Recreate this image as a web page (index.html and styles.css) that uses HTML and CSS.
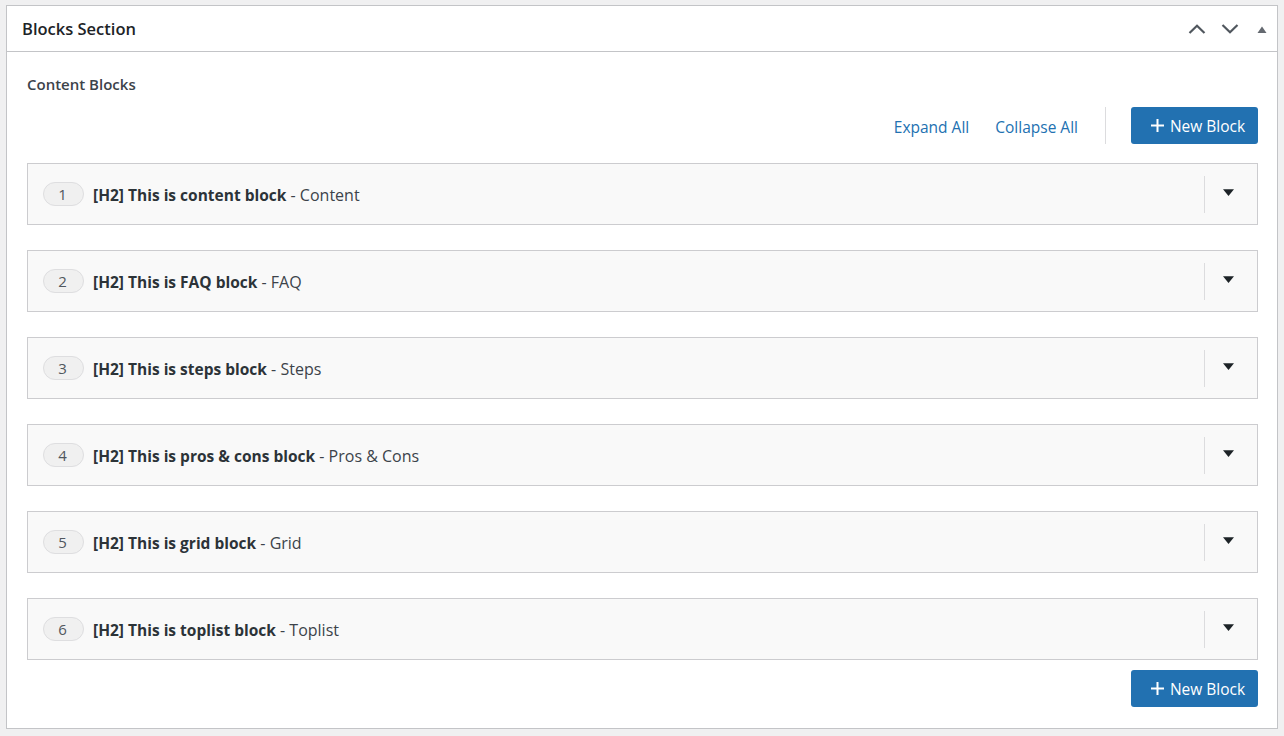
FILE: index.html
```html
<!DOCTYPE html>
<html>
<head>
<meta charset="utf-8">
<link rel="stylesheet" href="styles.css">
</head>
<body>
<div class="panel">
  <div class="panel-head">
    <h2 class="panel-title">Blocks Section</h2>
    <div class="head-actions">
      <svg class="chev" width="18" height="10" viewBox="0 0 18 10"><path d="M1.5 9 L9 1.8 L16.5 9" fill="none" stroke="#50575e" stroke-width="2.2"/></svg>
      <svg class="chev" width="18" height="10" viewBox="0 0 18 10"><path d="M1.5 1 L9 8.2 L16.5 1" fill="none" stroke="#50575e" stroke-width="2.2"/></svg>
      <svg class="tri-up" width="10" height="7" viewBox="0 0 10 7"><path d="M0.5 7 L5 0.5 L9.5 7 Z" fill="#646970"/></svg>
    </div>
  </div>
  <div class="panel-body">
    <div class="label">Content Blocks</div>
    <div class="toolbar">
      <a class="link">Expand All</a>
      <a class="link">Collapse All</a>
      <span class="vsep"></span>
      <button class="btn"><svg width="13" height="13" viewBox="0 0 13 13"><path d="M6.5 0 V13 M0 6.5 H13" stroke="#fff" stroke-width="2"/></svg><span>New Block</span></button>
    </div>
    <div class="blocks">
      <div class="block"><span class="num">1</span><span class="title"><b>[H2] This is content block</b> - Content</span><span class="toggle"><svg width="11" height="7" viewBox="0 0 11 7"><path d="M0 0.3 H11 L5.5 7 Z" fill="#1d2327"/></svg></span></div>
      <div class="block"><span class="num">2</span><span class="title"><b>[H2] This is FAQ block</b> - FAQ</span><span class="toggle"><svg width="11" height="7" viewBox="0 0 11 7"><path d="M0 0.3 H11 L5.5 7 Z" fill="#1d2327"/></svg></span></div>
      <div class="block"><span class="num">3</span><span class="title"><b>[H2] This is steps block</b> - Steps</span><span class="toggle"><svg width="11" height="7" viewBox="0 0 11 7"><path d="M0 0.3 H11 L5.5 7 Z" fill="#1d2327"/></svg></span></div>
      <div class="block"><span class="num">4</span><span class="title"><b>[H2] This is pros &amp; cons block</b> - Pros &amp; Cons</span><span class="toggle"><svg width="11" height="7" viewBox="0 0 11 7"><path d="M0 0.3 H11 L5.5 7 Z" fill="#1d2327"/></svg></span></div>
      <div class="block"><span class="num">5</span><span class="title"><b>[H2] This is grid block</b> - Grid</span><span class="toggle"><svg width="11" height="7" viewBox="0 0 11 7"><path d="M0 0.3 H11 L5.5 7 Z" fill="#1d2327"/></svg></span></div>
      <div class="block"><span class="num">6</span><span class="title"><b>[H2] This is toplist block</b> - Toplist</span><span class="toggle"><svg width="11" height="7" viewBox="0 0 11 7"><path d="M0 0.3 H11 L5.5 7 Z" fill="#1d2327"/></svg></span></div>
    </div>
    <div class="bottom">
      <button class="btn"><svg width="13" height="13" viewBox="0 0 13 13"><path d="M6.5 0 V13 M0 6.5 H13" stroke="#fff" stroke-width="2"/></svg><span>New Block</span></button>
    </div>
  </div>
</div>
</body>
</html>
```
FILE: styles.css
```css
* { box-sizing: border-box; }
html, body { margin: 0; padding: 0; }
body {
  background: #f0f0f1;
  font-family: "Open Sans", "Noto Sans", sans-serif;
  color: #3c434a;
  padding: 5px 6px 7px 6px;
}
.panel {
  background: #fff;
  border: 1px solid #c3c4c7;
  height: 724px;
}
.panel-head {
  height: 46px;
  border-bottom: 1px solid #c3c4c7;
  display: flex;
  align-items: center;
  justify-content: space-between;
  padding: 0 15px 0 15px;
}
.panel-title {
  margin: 0;
  font-size: 16.5px;
  font-weight: 600;
  color: #1d2327;
}
.head-actions {
  display: flex;
  align-items: center;
  margin-top: 1px;
}
.chev { margin-left: 15px; }
.tri-up { margin-left: 18px; margin-right: -5px; }
.panel-body {
  padding: 0 19px 0 20px;
}
.label {
  font-size: 15px;
  font-weight: 600;
  color: #3c434a;
  padding-top: 22px;
  height: 55px;
}
.toolbar {
  display: flex;
  justify-content: flex-end;
  align-items: center;
  height: 37px;
}
.link {
  color: #2271b1;
  font-size: 15.5px;
  margin-left: 26px;
  margin-top: 2px;
}
.vsep {
  width: 1px;
  height: 37px;
  background: #dcdcde;
  margin: 0 25px 0 27px;
}
.btn {
  width: 127px;
  height: 37px;
  background: #2271b1;
  color: #fff;
  border: 0;
  border-radius: 3px;
  font-family: inherit;
  font-size: 15.5px;
  display: flex;
  align-items: center;
  justify-content: center;
  gap: 6px;
  padding: 0 0 0 7px;
}
.btn svg { margin-top: -1px; }
.blocks {
  margin-top: 19px;
  display: flex;
  flex-direction: column;
  gap: 25px;
}
.block {
  height: 62px;
  background: #f9f9f9;
  border: 1px solid #cccccf;
  display: flex;
  align-items: center;
  padding-left: 15px;
}
.num {
  width: 41px;
  height: 24px;
  border-radius: 12px;
  background: #f0f0f0;
  border: 1px solid #dedee0;
  color: #50575e;
  font-size: 15px;
  display: flex;
  align-items: center;
  justify-content: center;
  margin-right: 9px;
  padding-right: 2px;
}
.title {
  flex: 1;
  font-size: 16px;
  color: #3c434a;
  margin-top: 1px;
}
.title b { font-weight: 700; color: #2c3338; font-size: 15.5px; }
.toggle {
  width: 53px;
  height: 37px;
  border-left: 1px solid #dcdcde;
  display: flex;
  align-items: center;
  justify-content: center;
  padding-bottom: 3px;
  padding-right: 6px;
}
.bottom {
  display: flex;
  justify-content: flex-end;
  margin-top: 10px;
}
```
